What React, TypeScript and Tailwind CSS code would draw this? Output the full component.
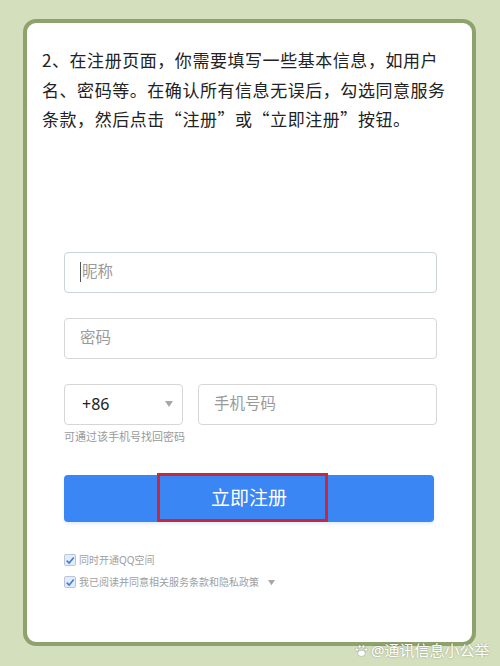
import React from "react";

const font = { fontFamily: '"Noto Sans", "Noto Sans CJK SC", sans-serif' };
const cjk = { fontFamily: '"Noto Sans CJK SC", "Noto Sans", sans-serif' };

function Check() {
  return (
    <span className="inline-flex h-[12px] w-[12px] items-center justify-center rounded-[2px] border border-[#b8c6dc] bg-[#e4ecf8]">
      <svg width="11" height="11" viewBox="0 0 12 12">
        <path d="M2 6.2 L5 9 L10.5 2.5" fill="none" stroke="#3e7fd9" strokeWidth="2" />
      </svg>
    </span>
  );
}

export default function App() {
  return (
    <div className="relative h-[666px] w-[500px] overflow-hidden bg-[#d4e0bd]" style={font}>
      <div className="absolute left-[23px] top-[19px] h-[627px] w-[453px] rounded-[13px] border-4 border-[#8ea26e] bg-white">
        <div className="flex flex-col pl-[37px] pr-[35px]">
          <p
            className="-ml-[22px] -mr-[20px] mt-[22px] text-[17px] leading-[29.5px] tracking-[0.55px] text-[#222]"
            style={cjk}
          >
            2、在注册页面，你需要填写一些基本信息，如用户名、密码等。在确认所有信息无误后，勾选同意服务条款，然后点击“注册”或“立即注册”按钮。
          </p>
          <div className="mt-[118px] flex h-[41px] items-center rounded-[4px] border border-[#c9d3d9] px-[15px] text-[15.5px] text-[#9a9a9a]">
            <span className="mr-[1px] h-[20px] w-[1px] bg-[#555]" />
            昵称
          </div>
          <div className="mt-[25px] flex h-[41px] items-center rounded-[4px] border border-[#d6d6d6] px-[15px] text-[15.5px] text-[#9a9a9a]">
            密码
          </div>
          <div className="mt-[25px] flex gap-[15px]">
            <div className="flex h-[41px] w-[119px] items-center justify-between rounded-[4px] border border-[#d6d6d6] pl-[17px] pr-[8px] text-[16px] text-[#222]">
              <span>+86</span>
              <svg width="10" height="8" viewBox="0 0 10 8">
                <path d="M1 1 L9 1 L5 7 Z" fill="#a8a8a8" />
              </svg>
            </div>
            <div className="flex h-[41px] flex-1 items-center rounded-[4px] border border-[#d6d6d6] px-[15px] text-[15.5px] text-[#9a9a9a]">
              手机号码
            </div>
          </div>
          <div className="mt-[4px] text-[11px] leading-[16px] text-[#9a9a9a]">可通过该手机号找回密码</div>
          <div className="relative mt-[30px] flex h-[47px] w-[370px] items-center justify-center rounded-[4px] bg-[#3a86f4] shadow-[0_2px_3px_rgba(58,134,244,0.15)]">
            <span className="text-[19px] text-white">立即注册</span>
            <div className="absolute left-[93px] top-[-2px] h-[49px] w-[171px] border-[3px] border-[#c8283a]" />
          </div>
          <div className="mt-[31px] flex items-center gap-[3px] text-[10px] text-[#a0a0a0]">
            <Check />
            <span>同时开通QQ空间</span>
          </div>
          <div className="mt-[7px] flex items-center gap-[3px] text-[10px] text-[#a0a0a0]">
            <Check />
            <span>我已阅读并同意相关服务条款和隐私政策</span>
            <svg className="ml-[5px]" width="9" height="7" viewBox="0 0 10 8">
              <path d="M1 1 L9 1 L5 7 Z" fill="#a8a8a8" />
            </svg>
          </div>
        </div>
      </div>
      <div className="absolute left-[354px] top-[639px] flex items-center gap-[2px] text-[15px] text-white [text-shadow:0_0_2px_rgba(0,0,0,0.35)]">
        <svg width="15" height="15" viewBox="0 0 16 16">
          <g fill="white" stroke="rgba(0,0,0,0.3)" strokeWidth="0.6">
            <ellipse cx="8" cy="11" rx="4" ry="3.3" />
            <circle cx="3" cy="7" r="1.6" />
            <circle cx="6" cy="3.8" r="1.6" />
            <circle cx="10" cy="3.8" r="1.6" />
            <circle cx="13" cy="7" r="1.6" />
          </g>
        </svg>
        <span>@通讯信息小公举</span>
      </div>
    </div>
  );
}
